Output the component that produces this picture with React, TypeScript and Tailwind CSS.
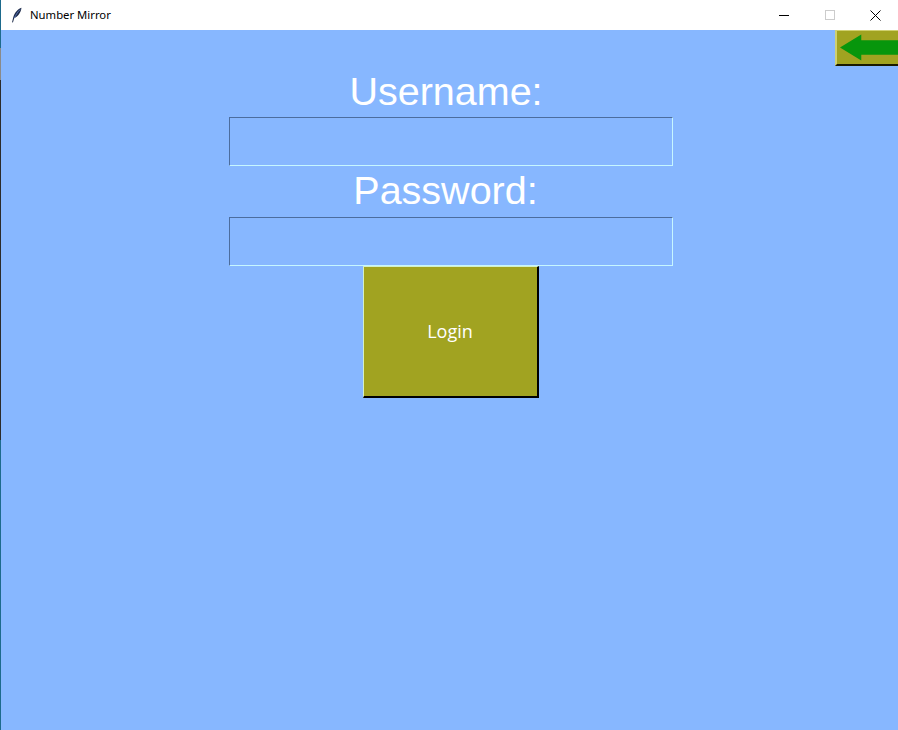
export default function App() {
  return (
    <div className="flex h-[730px] w-[898px] overflow-hidden bg-[#87b7ff]" style={{ fontFamily: 'Arial' }}>
      {/* 1px desktop edge showing behind the window */}
      <div className="flex w-px shrink-0 flex-col">
        <div className="h-[48px] bg-[#1d6a8c]" />
        <div className="h-[32px] bg-[#8a8a8a]" />
        <div className="h-[360px] bg-[#2b2b2b]" />
        <div className="flex-1 bg-[#1d6a8c]" />
      </div>

      <div className="flex flex-1 flex-col">
        {/* Title bar */}
        <div className="flex h-[30px] items-center bg-white">
          <svg width="12" height="16" viewBox="0 0 12 16" className="ml-[10px]">
            <path d="M10.5 0.8 C7 2 3.5 5.5 2.2 10.5 L1 15.5 L2 15.2 L3.2 11.2 C6.5 10 9.8 6 10.5 0.8 Z" fill="#1f2c4a" />
            <path d="M9.2 2.5 C7 4.5 5 7.5 3.4 11" stroke="#5b7bbf" strokeWidth="0.9" fill="none" />
          </svg>
          <span className="ml-[7px] text-[11.3px] text-black" style={{ fontFamily: '"Noto Sans", sans-serif' }}>
            Number Mirror
          </span>
          <div className="ml-auto flex h-full items-center">
            <div className="flex h-full w-[46px] items-center justify-center">
              <div className="h-px w-[10px] bg-black" />
            </div>
            <div className="flex h-full w-[46px] items-center justify-center">
              <div className="h-[10px] w-[10px] border border-[#cccccc]" />
            </div>
            <div className="flex h-full w-[45px] items-center justify-center">
              <svg width="11" height="11" viewBox="0 0 11 11">
                <path d="M0.5 0.5 L10.5 10.5 M10.5 0.5 L0.5 10.5" stroke="#000" strokeWidth="1" />
              </svg>
            </div>
          </div>
        </div>

        {/* Content */}
        <div className="relative flex flex-1 flex-col items-center pl-[2px]">
          {/* back button */}
          <button className="absolute right-0 top-0 flex h-[36px] w-[63px] items-center border-l-2 border-t border-b-2 border-l-[#cfd070] border-t-[#cfd070] border-b-[#1a1a00] bg-[#a1a321] pl-[3px]">
            <svg width="60" height="28" viewBox="0 0 60 28">
              <path d="M0 13.5 L22 0 L22 6 L60 6 L60 21 L22 21 L22 27 Z" fill="#07960c" />
            </svg>
          </button>

          <div className="ml-[-9px] mt-[39px] h-[48px] text-[39.5px] leading-[44px] text-white">Username:</div>
          <div className="h-[49px] w-[444px] border border-b-[#c6f6ff] border-l-[#4c6d9e] border-r-[#c6f6ff] border-t-[#4c6d9e] bg-[#87b7ff]" />
          <div className="ml-[-10px] h-[51px] pt-[2px] text-[39.5px] leading-[44px] text-white">Password:</div>
          <div className="h-[49px] w-[444px] border border-b-[#c6f6ff] border-l-[#4c6d9e] border-r-[#c6f6ff] border-t-[#4c6d9e] bg-[#87b7ff]" />
          <button
            className="flex h-[132px] w-[176px] items-center justify-center border-b-2 border-l border-r-2 border-t border-b-black border-l-[#d4f0c8] border-r-black border-t-[#d4f0c8] bg-[#a1a321] text-[18px] text-white"
            style={{ fontFamily: '"Open Sans", sans-serif' }}
          >
            Login
          </button>
        </div>
      </div>
    </div>
  );
}
